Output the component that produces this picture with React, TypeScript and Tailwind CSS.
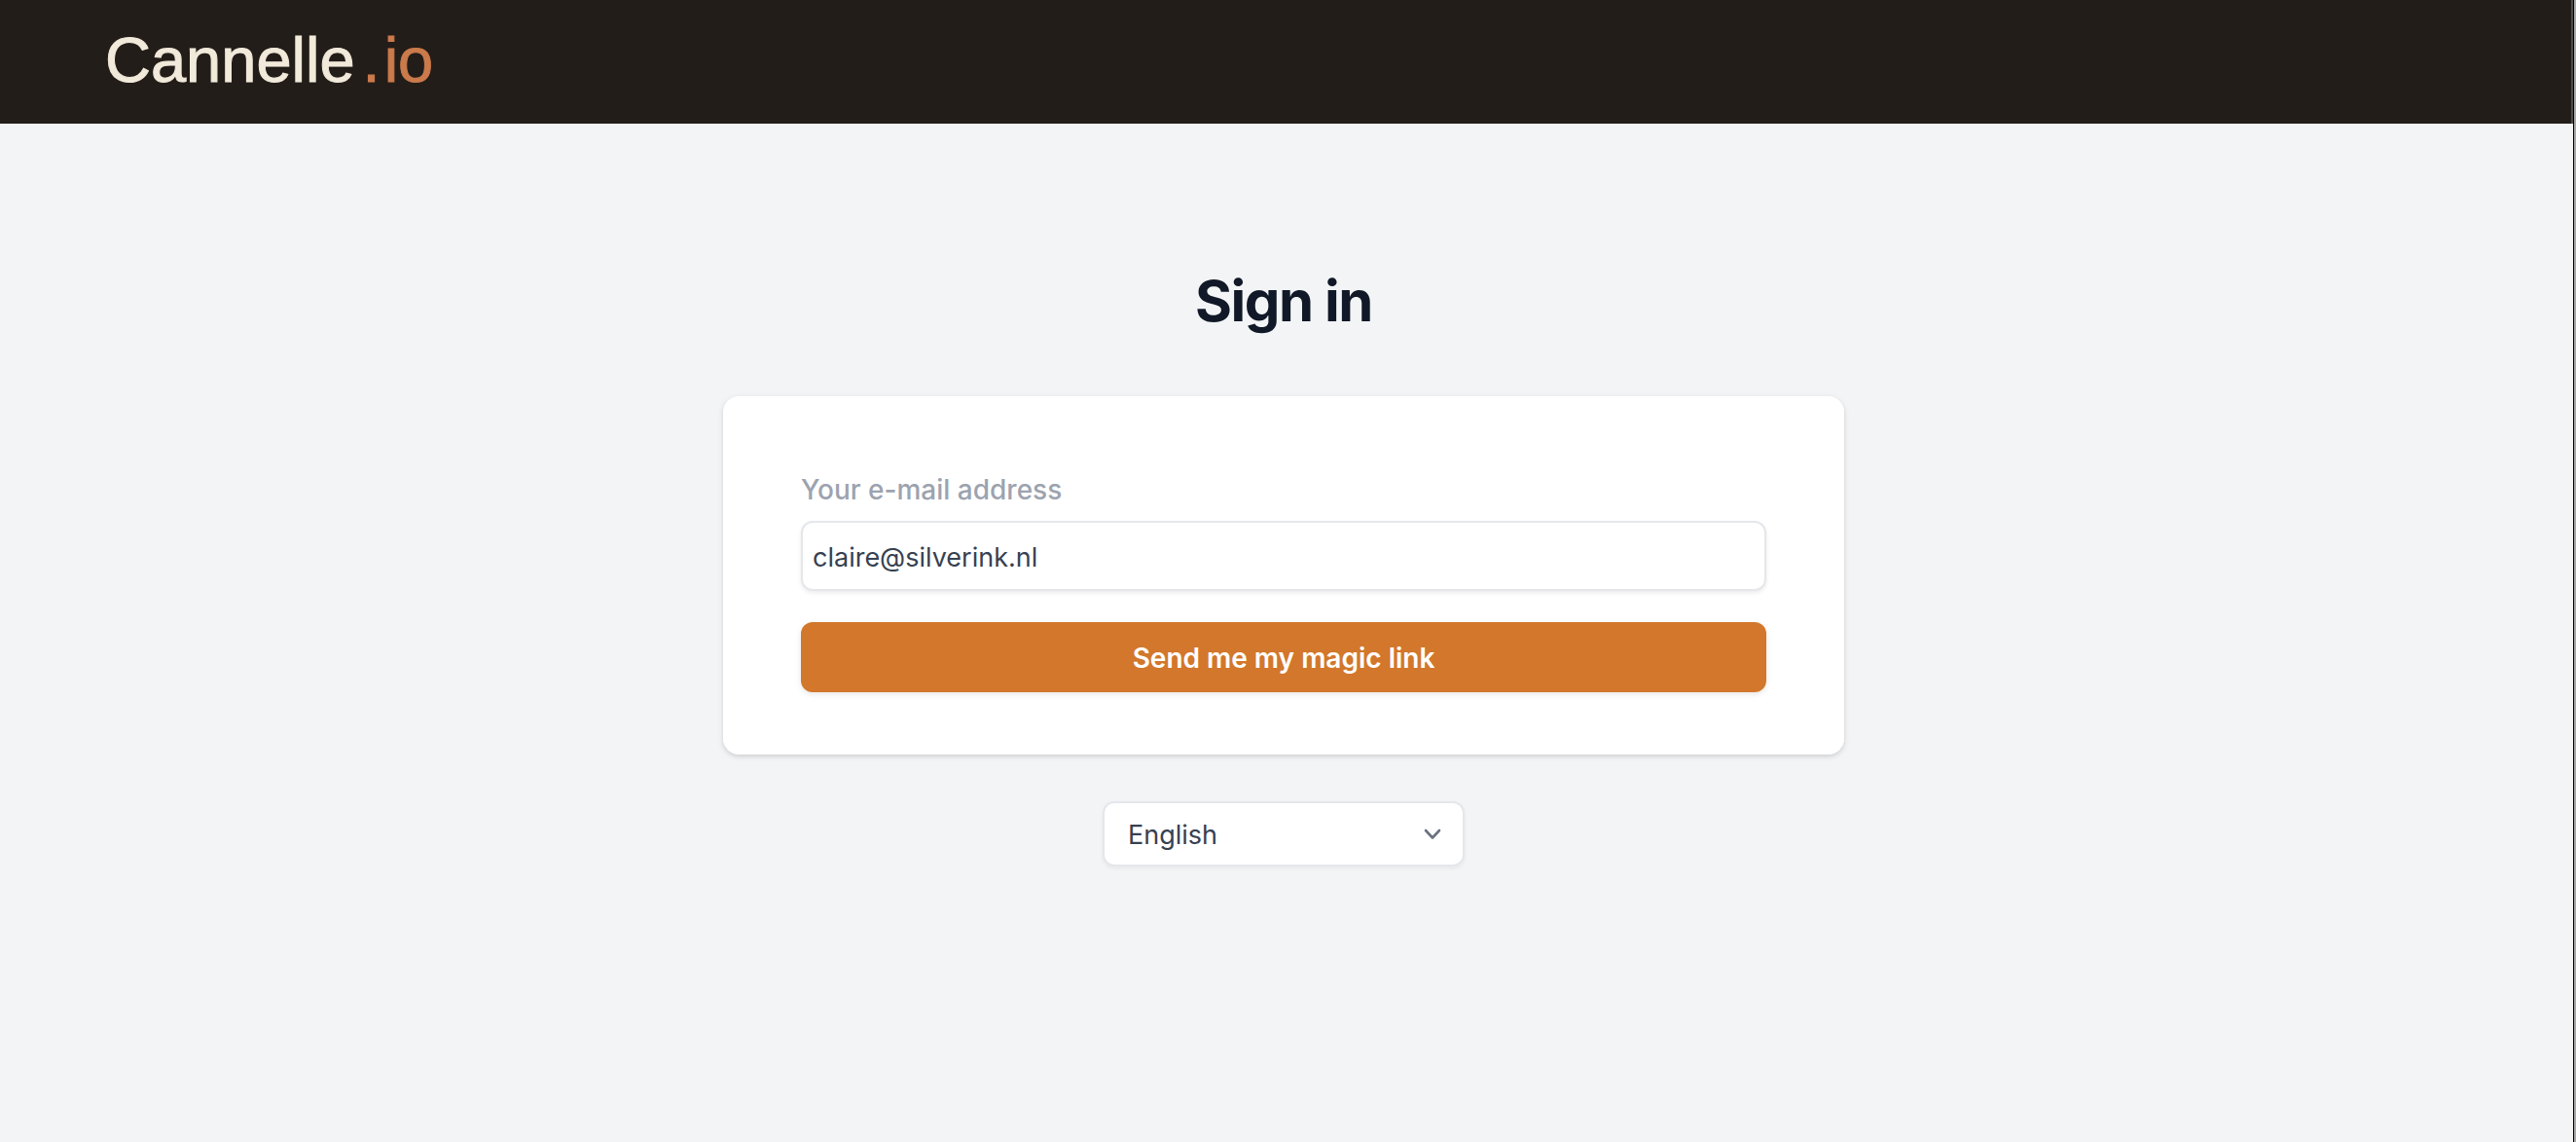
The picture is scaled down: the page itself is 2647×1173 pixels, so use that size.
import { useState } from 'react';

const languages = ['English', 'Nederlands', 'Français', 'Deutsch'];

function Header() {
  return (
    <header className="h-[127px] bg-[#231d19] border-r-2 border-[#4f4a47] pl-[108px] pb-1 flex items-center">
      <a
        href="#"
        className="flex items-baseline font-['Liberation_Sans',Arial,sans-serif] text-[65px] leading-[72px] text-[#f1e9da] [-webkit-text-stroke:1px]"
      >
        <span>Cannelle</span>
        <span className="ml-2 text-[#cb7a4b]">.</span>
        <span className="ml-1 text-[#cb7a4b]">io</span>
      </a>
    </header>
  );
}

function SignInForm() {
  const [email, setEmail] = useState('claire@silverink.nl');

  return (
    <form
      onSubmit={(e) => e.preventDefault()}
      className="w-full max-w-6xl bg-white rounded-2xl shadow-[0_2px_6px_rgba(0,0,0,0.1),0_2px_4px_rgba(0,0,0,0.06)] px-20 pt-[72px] pb-16"
    >
      <label htmlFor="email" className="block mb-2 text-[28px] leading-[48px] font-medium text-[#9ca3af]">
        Your e-mail address
      </label>
      <input
        id="email"
        type="email"
        value={email}
        onChange={(e) => setEmail(e.target.value)}
        className="block w-full h-[72px] px-[10px] pt-[2px] border-2 border-[#e5e7eb] rounded-xl bg-white text-[27px] text-[#374151] shadow-[0_2px_4px_rgba(0,0,0,0.08)] focus:outline-none focus:border-[#d2772b]"
      />
      <button
        type="submit"
        className="block w-full h-[72px] mt-8 pt-[2px] rounded-xl bg-[#d2772b] text-[28px] font-semibold text-white shadow-[0_2px_6px_rgba(0,0,0,0.1)] hover:bg-[#bd6a24]"
      >
        Send me my magic link
      </button>
    </form>
  );
}

function LanguageSelect() {
  const [language, setLanguage] = useState('English');

  return (
    <div className="relative mt-12 w-[372px]">
      <select
        aria-label="Language"
        value={language}
        onChange={(e) => setLanguage(e.target.value)}
        className="appearance-none block w-full h-[67px] pt-1 pl-6 pr-16 border-2 border-[#e5e7eb] rounded-xl bg-white text-[27px] text-[#374151] shadow-[0_2px_4px_rgba(0,0,0,0.05)] focus:outline-none"
      >
        {languages.map((name) => (
          <option key={name}>{name}</option>
        ))}
      </select>
      <svg
        className="absolute right-6 top-7 w-[18px] h-3 pointer-events-none"
        viewBox="0 0 18 12"
        fill="none"
        stroke="#6b7280"
        strokeWidth="2.6"
        strokeLinecap="round"
        strokeLinejoin="round"
      >
        <path d="M2 2l7 7.5 7-7.5" />
      </svg>
    </div>
  );
}

export default function App() {
  return (
    <div className="flex min-h-screen bg-[#f2f4f6] font-[Inter,sans-serif]">
      <div className="flex-1 min-w-0">
        <Header />
        <main className="flex flex-col items-center pt-[146px] pb-16 pr-[6px]">
          <h1 className="mb-[62px] text-[58px] leading-[72px] font-bold tracking-tight text-[#111827]">Sign in</h1>
          <SignInForm />
          <LanguageSelect />
        </main>
      </div>
      {/* window edge */}
      <div className="w-[3px] border-l border-black bg-[#a9a8a7]" />
    </div>
  );
}
